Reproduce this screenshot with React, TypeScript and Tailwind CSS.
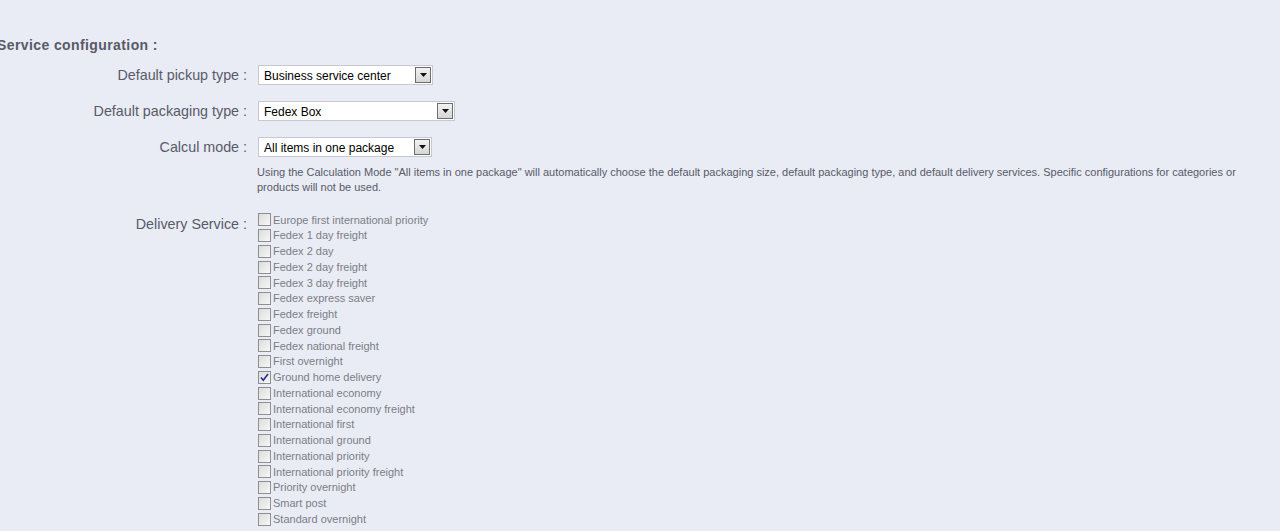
import React from "react"

const services = [
  "Europe first international priority",
  "Fedex 1 day freight",
  "Fedex 2 day",
  "Fedex 2 day freight",
  "Fedex 3 day freight",
  "Fedex express saver",
  "Fedex freight",
  "Fedex ground",
  "Fedex national freight",
  "First overnight",
  "Ground home delivery",
  "International economy",
  "International economy freight",
  "International first",
  "International ground",
  "International priority",
  "International priority freight",
  "Priority overnight",
  "Smart post",
  "Standard overnight",
]

const checked = ["Ground home delivery"]

// old-school windows select look
const FakeSelect = ({ value, width }: { value: string; width: string }) => (
  <div className={`${width} h-[20px] bg-white border border-[#c6c9cf] flex items-center justify-between pl-[5px] pr-[1px]`}>
    <span className="text-[12px] text-black leading-none pt-[2px]">{value}</span>
    <span className="w-[16px] h-[16px] border border-[#6d6d6d] bg-gradient-to-b from-[#f2f2f2] to-[#d6d6d6] flex items-center justify-center">
      <svg width="7" height="4" viewBox="0 0 7 4">
        <path d="M0 0h7L3.5 4z" fill="#111" />
      </svg>
    </span>
  </div>
)

const Check = ({ on }: { on: boolean }) => (
  <span className="w-[13px] h-[13px] border border-[#8f8f8f] bg-gradient-to-br from-[#dcdcdc] to-[#f7f7f7] flex items-center justify-center shrink-0">
    {on && (
      <svg width="9" height="9" viewBox="0 0 9 9">
        <path d="M1 4.5l2.3 2.8L8 1" stroke="#1f2f8f" strokeWidth="1.6" fill="none" />
      </svg>
    )}
  </span>
)

const App = () => {
  return (
    <div className="w-[1280px] h-[531px] overflow-hidden bg-[#e9ecf4] text-[#585a69] font-['Liberation_Sans',Arial,sans-serif]">
      <div className="pt-[36px] -ml-[3px] text-[14px] font-bold leading-[18px] tracking-[0.4px]">Service configuration :</div>

      <div className="mt-[11px] flex items-center h-[20px]">
        <label className="w-[247px] text-right text-[14.3px] pt-[2px]">Default pickup type :</label>
        <div className="ml-[11px]">
          <FakeSelect value="Business service center" width="w-[175px]" />
        </div>
      </div>

      <div className="mt-[16px] flex items-center h-[20px]">
        <label className="w-[247px] text-right text-[14.3px] pt-[2px]">Default packaging type :</label>
        <div className="ml-[11px]">
          <FakeSelect value="Fedex Box" width="w-[197px]" />
        </div>
      </div>

      <div className="mt-[16px] flex items-center h-[20px]">
        <label className="w-[247px] text-right text-[14.3px] pt-[2px]">Calcul mode :</label>
        <div className="ml-[11px]">
          <FakeSelect value="All items in one package" width="w-[174px]" />
        </div>
      </div>

      <p className="mt-[8px] ml-[257px] w-[985px] text-[11px] leading-[15px] text-[#585a69]">
        Using the Calculation Mode "All items in one package" will automatically choose the default packaging size, default packaging type, and default delivery services. Specific configurations for categories or products will not be used.
      </p>

      <div className="mt-[17px] flex">
        <label className="w-[247px] text-right text-[14.3px] pt-[2px]">Delivery Service :</label>
        <ul className="ml-[11px]">
          {services.map((s) => (
            <li key={s} className="h-[15.75px] flex items-center gap-[2px] text-[11px] text-[#7c7d88]">
              <Check on={checked.includes(s)} />
              <span>{s}</span>
            </li>
          ))}
        </ul>
      </div>
    </div>
  )
}

export default App
